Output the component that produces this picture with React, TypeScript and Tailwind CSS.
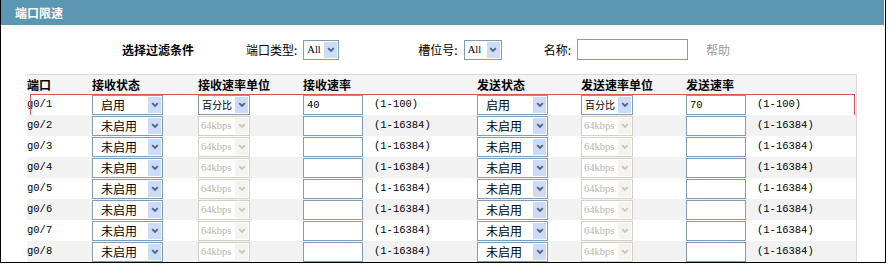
import React from 'react';

const CJK = '[font-family:"Noto_Sans_CJK_SC","Noto_Sans",sans-serif]';
const MONO = '[font-family:"Liberation_Mono","Noto_Sans_CJK_SC",monospace]';
const SERIF = '[font-family:"Liberation_Serif","Noto_Sans_CJK_SC",serif]';

function Chevron({ disabled }: { disabled?: boolean }) {
  return (
    <svg width="8" height="6" viewBox="0 0 8 6">
      <polyline
        points="1.2,1.2 4,4 6.8,1.2"
        fill="none"
        stroke={disabled ? '#c9c7ba' : '#4d6185'}
        strokeWidth="1.8"
      />
    </svg>
  );
}

function Select({
  label,
  className,
  disabled,
  text = 'text-[12px]',
  pad = 'pl-2',
}: {
  label: string;
  className: string;
  disabled?: boolean;
  text?: string;
  pad?: string;
}) {
  return (
    <div
      className={`flex h-[20px] items-stretch border bg-white ${className} ${
        disabled ? 'border-[#d3d1c6] text-[#b8b5a8]' : 'border-[#7f9db9] text-black'
      }`}
    >
      <span className={`min-w-0 flex-1 whitespace-nowrap ${pad} leading-[18px] ${text}`}>
        {label}
      </span>
      <span
        className={`m-px flex w-[13px] shrink-0 items-center justify-center ${
          disabled ? 'bg-[#f4f3ee]' : 'bg-[#cddbfa]'
        }`}
      >
        <Chevron disabled={disabled} />
      </span>
    </div>
  );
}

function Input({ value, className }: { value?: string; className: string }) {
  return (
    <div className={`h-[20px] border border-[#7f9db9] bg-white pl-[3px] text-[10.5px] leading-[18px] ${MONO} ${className}`}>
      {value}
    </div>
  );
}

const rows = [
  { port: 'g0/1', on: true },
  { port: 'g0/2' },
  { port: 'g0/3' },
  { port: 'g0/4' },
  { port: 'g0/5' },
  { port: 'g0/6' },
  { port: 'g0/7' },
  { port: 'g0/8' },
];

const cols = 'grid grid-cols-[65px_106px_105px_67px_107px_104px_105px_67px_104px] items-center';
const MONO_TXT = `text-[10.5px] ${MONO}`;
const SMALL_TXT = `text-[10.5px] ${SERIF}`;

function Unit({ on }: { on?: boolean }) {
  return on ? (
    <Select label="百分比" className="w-[52px]" pad="pl-[3px]" text="text-[10px]" />
  ) : (
    <Select label="64kbps" className="w-[52px]" disabled pad="pl-[2px]" text={SMALL_TXT} />
  );
}

export default function App() {
  return (
    <div className={`h-[264px] w-[891px] bg-white ${CJK}`}>
      <div className="h-[263px] w-[886px] overflow-hidden border-r border-b border-l border-black">
        {/* title bar */}
        <div className="mr-px flex h-[25px] items-center bg-[#5b97b2] pl-[14px] text-[12px] font-bold text-white">
          端口限速
        </div>

        {/* filter */}
        <div className="flex h-[49px] items-center text-[12px] text-black">
          <span className="ml-[121px] font-bold">选择过滤条件</span>
          <span className="ml-[52px]">端口类型:</span>
          <Select label="All" className="ml-[6px] w-[36px]" text={SMALL_TXT} pad="pl-[3px]" />
          <span className="ml-[79px]">槽位号:</span>
          <Select label="All" className="ml-[6px] w-[38px]" text={SMALL_TXT} pad="pl-[3px]" />
          <span className="ml-[42px]">名称:</span>
          <div className="ml-[6px] h-[21px] w-[111px] border border-[#7f9db9] bg-white" />
          <span className="ml-[18px] text-[#9a9a9a]">帮助</span>
        </div>

        {/* table */}
        <div className="ml-[26px] w-[830px] border-t border-r border-[#dadada] text-[12px]">
          <div className={`${cols} h-[19px] bg-[#f4f4f4] font-bold`}>
            <span>端口</span>
            <span>接收状态</span>
            <span>接收速率单位</span>
            <span>接收速率</span>
            <span />
            <span>发送状态</span>
            <span>发送速率单位</span>
            <span>发送速率</span>
            <span />
          </div>
          {rows.map((r, i) => (
            <div
              key={r.port}
              className={`${cols} relative h-[21px] ${i % 2 === 1 ? 'bg-[#f2f2f2]' : 'bg-white'}`}
            >
              <span className={MONO_TXT}>{r.port}</span>
              <Select label={r.on ? '启用' : '未启用'} className="w-[71px]" />
              <Unit on={r.on} />
              <Input value={r.on ? '40' : ''} className="w-[60px]" />
              <span className={`pl-[4px] ${MONO_TXT}`}>{r.on ? '(1-100)' : '(1-16384)'}</span>
              <Select label={r.on ? '启用' : '未启用'} className="w-[71px]" />
              <Unit on={r.on} />
              <Input value={r.on ? '70' : ''} className="w-[60px]" />
              <span className={`pl-[4px] ${MONO_TXT}`}>{r.on ? '(1-100)' : '(1-16384)'}</span>
              {r.on && (
                <div className="pointer-events-none absolute top-0 right-px -bottom-px left-[3px] border border-[#d9534f]" />
              )}
            </div>
          ))}
        </div>
      </div>
    </div>
  );
}
